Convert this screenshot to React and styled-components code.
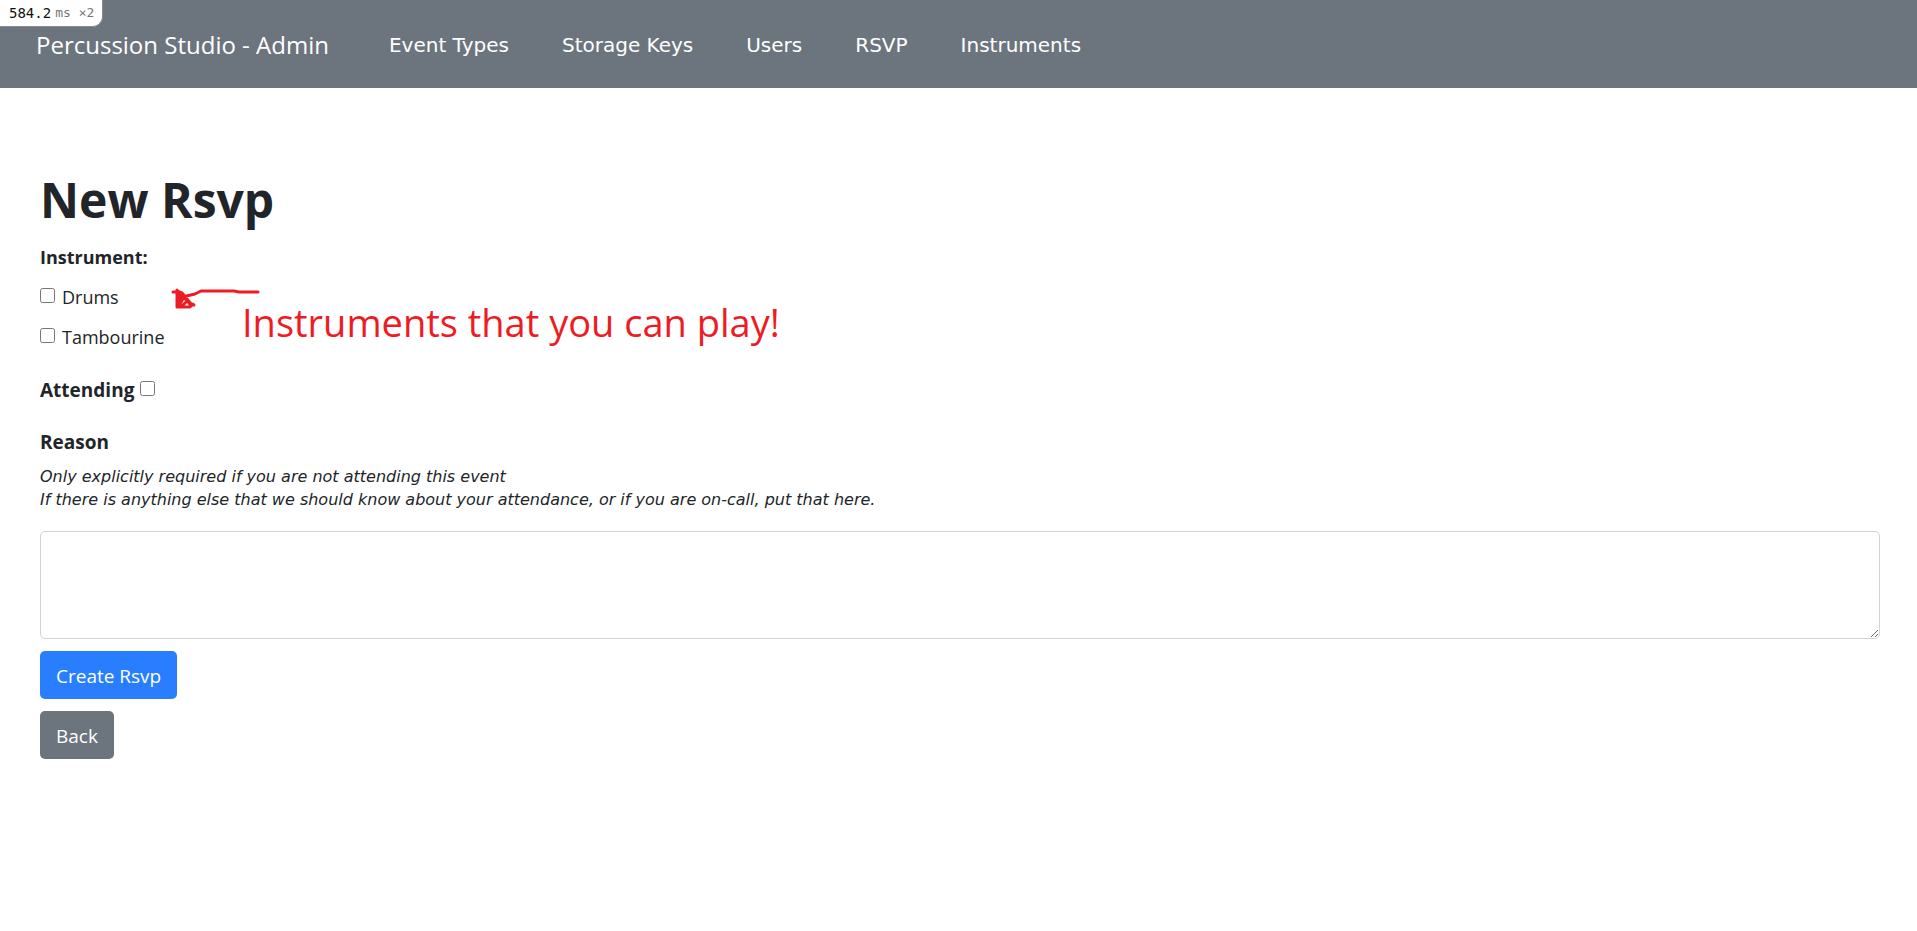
import React from "react";
import styled, { createGlobalStyle } from "styled-components";

const GlobalStyle = createGlobalStyle`
  *, *::before, *::after { box-sizing: border-box; }
  body {
    margin: 0;
    background: #fff;
    color: #212529;
    font-family: "Open Sans", "Noto Sans", sans-serif;
    font-size: 19px;
    line-height: 30px;
  }
`;

const Profiler = styled.div`
  position: absolute;
  top: 0;
  left: 0;
  display: flex;
  align-items: center;
  gap: 4px;
  height: 27px;
  padding: 0 8px 0 9px;
  border-right: 1px solid #888;
  border-bottom: 1px solid #888;
  border-bottom-right-radius: 10px;
  background: #fff;
  color: #111;
  font: 14px/26px "DejaVu Sans Mono", monospace;
`;

const ProfilerUnit = styled.span`
  color: #777;
  font-size: 13px;
`;

const Navbar = styled.nav`
  display: flex;
  align-items: center;
  gap: 60px;
  height: 88px;
  padding: 2px 36px 0;
  background: #6c757d;
`;

const Brand = styled.a`
  color: #fff;
  font-size: 24px;
  line-height: 36px;
  text-decoration: none;
  white-space: nowrap;
`;

const NavList = styled.ul`
  display: flex;
  gap: 53px;
  margin: 0;
  padding: 0;
  list-style: none;
`;

const NavLink = styled.a`
  color: #fff;
  font-family: "DejaVu Sans", sans-serif;
  font-size: 20px;
  text-decoration: none;
  white-space: nowrap;
`;

const Main = styled.main`
  padding: 82px 37px 40px 40px;
`;

const Title = styled.h1`
  margin: 0 0 12px;
  font-size: 48px;
  font-weight: 700;
  line-height: 60px;
`;

const Fieldset = styled.fieldset`
  position: relative;
  display: flex;
  flex-direction: column;
  gap: 10px;
  margin: 0 0 23px;
  padding: 0;
  border: 0;
`;

const Legend = styled.legend`
  padding: 0;
  margin-bottom: 10px;
  font-size: 18px;
  font-weight: 700;
`;

const CheckRow = styled.div`
  display: flex;
  align-items: center;
  gap: ${(p) => (p.$tight ? "6px" : "7px")};
`;

const Checkbox = styled.input`
  width: 15px;
  height: 15px;
  margin: 0 0 3px;
`;

const CheckLabel = styled.label`
  font-size: 18px;
`;

const FieldLabel = styled.label`
  font-weight: 700;
`;

const Note = styled.div`
  position: absolute;
  top: 0;
  left: 130px;
  display: flex;
  align-items: flex-start;
  color: #ed1c24;
  pointer-events: none;
`;

const Arrow = styled.svg`
  flex: none;
  width: 92px;
  height: 30px;
`;

const NoteText = styled.span`
  margin: 17px 0 0 -20px;
  font-size: 38px;
  line-height: 46px;
  white-space: nowrap;
`;

const Field = styled.div`
  display: flex;
  flex-direction: column;
  margin-top: 22px;
`;

const Hint = styled.p`
  margin: 8px 0 20px;
  font: italic 16px/23px "DejaVu Sans", sans-serif;
`;

const TextArea = styled.textarea`
  display: block;
  width: 100%;
  height: 108px;
  padding: 8px 15px;
  border: 1px solid #ced4da;
  border-radius: 5px;
  background: #fff;
  font: inherit;
  resize: vertical;
`;

const Actions = styled.div`
  display: flex;
  flex-direction: column;
  align-items: flex-start;
  gap: 12px;
  margin-top: 12px;
`;

const Button = styled.button`
  height: 48px;
  padding: 2px 16px 0;
  border: 0;
  border-radius: 5px;
  background: ${(p) => (p.$primary ? "#287eff" : "#6c757d")};
  color: #fff;
  font: inherit;
`;

const links = ["Event Types", "Storage Keys", "Users", "RSVP", "Instruments"];
const instruments = ["Drums", "Tambourine"];

export default function App() {
  return (
    <>
      <GlobalStyle />
      <Navbar>
        <Brand href="#">Percussion Studio - Admin</Brand>
        <NavList>
          {links.map((name) => (
            <li key={name}>
              <NavLink href="#">{name}</NavLink>
            </li>
          ))}
        </NavList>
      </Navbar>
      <Profiler>
        <span>584.2</span>
        <ProfilerUnit>ms ×2</ProfilerUnit>
      </Profiler>
      <Main>
        <Title>New Rsvp</Title>
        <form onSubmit={(e) => e.preventDefault()}>
          <Fieldset>
            <Legend>Instrument:</Legend>
            {instruments.map((name) => (
              <CheckRow key={name}>
                <Checkbox type="checkbox" id={name} />
                <CheckLabel htmlFor={name}>{name}</CheckLabel>
              </CheckRow>
            ))}
            <Note>
              <Arrow viewBox="0 0 92 30" fill="none" stroke="currentColor" strokeWidth="3" strokeLinecap="round" strokeLinejoin="round" aria-hidden="true">
                <path d="M88 10H69L64 9H31L25 12L12 15M3 10H10M7 8V25H20L23 22M7 9L12 11L22 23H24M9 10V24M11 12L10 22L14 15L17 19L12 24M14 14L21 24" />
              </Arrow>
              <NoteText>Instruments that you can play!</NoteText>
            </Note>
          </Fieldset>
          <CheckRow $tight>
            <FieldLabel htmlFor="attending">Attending</FieldLabel>
            <Checkbox type="checkbox" id="attending" />
          </CheckRow>
          <Field>
            <FieldLabel htmlFor="reason">Reason</FieldLabel>
            <Hint>
              Only explicitly required if you are not attending this event
              <br />
              If there is anything else that we should know about your attendance, or if you are on-call, put that here.
            </Hint>
            <TextArea id="reason" />
          </Field>
          <Actions>
            <Button type="submit" $primary>Create Rsvp</Button>
            <Button type="button">Back</Button>
          </Actions>
        </form>
      </Main>
    </>
  );
}
